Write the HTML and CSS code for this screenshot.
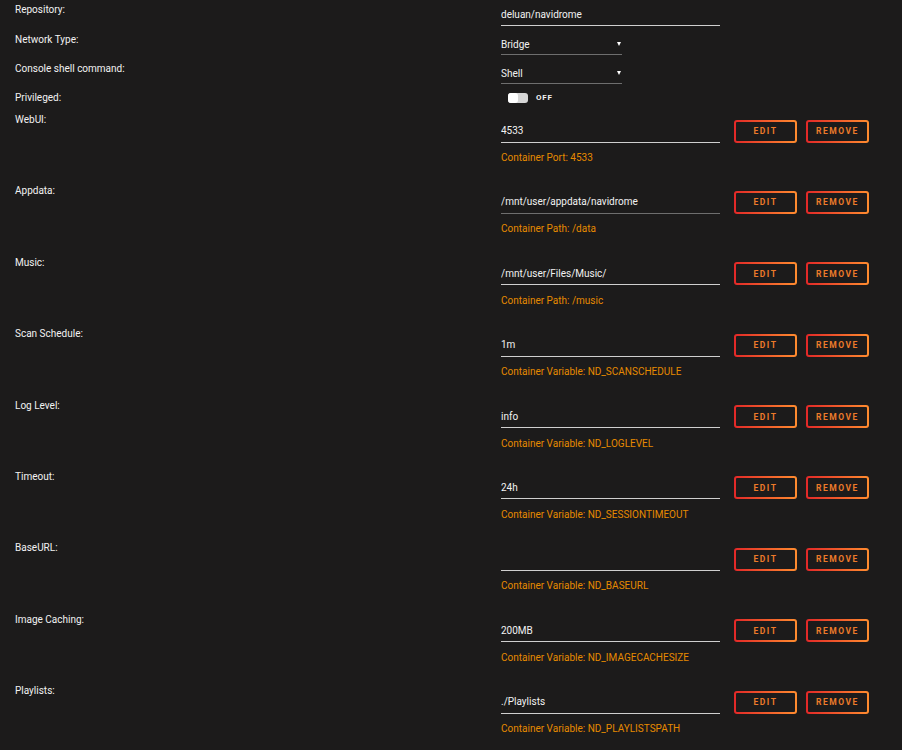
FILE: index.html
```html
<!DOCTYPE html>
<html lang="en">
<head>
    <meta charset="UTF-8">
    <meta name="viewport" content="width=device-width, initial-scale=1.0">
    <title>Update Container</title>
    <link rel="stylesheet" href="styles.css">
</head>
<body>
    <div class="form">
        <div class="row row-first">
            <div class="label">Repository:</div>
            <div class="value"><input type="text" class="text-input" value="deluan/navidrome"></div>
        </div>
        <div class="row">
            <div class="label">Network Type:</div>
            <div class="value">
                <span class="select-wrap"><select class="select-input"><option>Bridge</option></select></span>
            </div>
        </div>
        <div class="row">
            <div class="label">Console shell command:</div>
            <div class="value">
                <span class="select-wrap"><select class="select-input"><option>Shell</option></select></span>
            </div>
        </div>
        <div class="row row-toggle">
            <div class="label">Privileged:</div>
            <div class="value">
                <span class="switch"><span class="knob"></span></span>
                <span class="switch-text">OFF</span>
            </div>
        </div>

        <div class="config">
            <div class="label">WebUI:</div>
            <div class="value">
                <div class="field-line">
                    <input type="text" class="text-input" value="4533">
                    <button class="btn">EDIT</button>
                    <button class="btn">REMOVE</button>
                </div>
                <div class="hint">Container Port: 4533</div>
            </div>
        </div>
        <div class="config">
            <div class="label">Appdata:</div>
            <div class="value">
                <div class="field-line">
                    <input type="text" class="text-input dim" value="/mnt/user/appdata/navidrome">
                    <button class="btn">EDIT</button>
                    <button class="btn">REMOVE</button>
                </div>
                <div class="hint">Container Path: /data</div>
            </div>
        </div>
        <div class="config">
            <div class="label">Music:</div>
            <div class="value">
                <div class="field-line">
                    <input type="text" class="text-input" value="/mnt/user/Files/Music/">
                    <button class="btn">EDIT</button>
                    <button class="btn">REMOVE</button>
                </div>
                <div class="hint">Container Path: /music</div>
            </div>
        </div>
        <div class="config">
            <div class="label">Scan Schedule:</div>
            <div class="value">
                <div class="field-line">
                    <input type="text" class="text-input" value="1m">
                    <button class="btn">EDIT</button>
                    <button class="btn">REMOVE</button>
                </div>
                <div class="hint">Container Variable: ND_SCANSCHEDULE</div>
            </div>
        </div>
        <div class="config">
            <div class="label">Log Level:</div>
            <div class="value">
                <div class="field-line">
                    <input type="text" class="text-input" value="info">
                    <button class="btn">EDIT</button>
                    <button class="btn">REMOVE</button>
                </div>
                <div class="hint">Container Variable: ND_LOGLEVEL</div>
            </div>
        </div>
        <div class="config">
            <div class="label">Timeout:</div>
            <div class="value">
                <div class="field-line">
                    <input type="text" class="text-input" value="24h">
                    <button class="btn">EDIT</button>
                    <button class="btn">REMOVE</button>
                </div>
                <div class="hint">Container Variable: ND_SESSIONTIMEOUT</div>
            </div>
        </div>
        <div class="config">
            <div class="label">BaseURL:</div>
            <div class="value">
                <div class="field-line">
                    <input type="text" class="text-input" value="">
                    <button class="btn">EDIT</button>
                    <button class="btn">REMOVE</button>
                </div>
                <div class="hint">Container Variable: ND_BASEURL</div>
            </div>
        </div>
        <div class="config">
            <div class="label">Image Caching:</div>
            <div class="value">
                <div class="field-line">
                    <input type="text" class="text-input" value="200MB">
                    <button class="btn">EDIT</button>
                    <button class="btn">REMOVE</button>
                </div>
                <div class="hint">Container Variable: ND_IMAGECACHESIZE</div>
            </div>
        </div>
        <div class="config">
            <div class="label">Playlists:</div>
            <div class="value">
                <div class="field-line">
                    <input type="text" class="text-input" value="./Playlists">
                    <button class="btn">EDIT</button>
                    <button class="btn">REMOVE</button>
                </div>
                <div class="hint">Container Variable: ND_PLAYLISTSPATH</div>
            </div>
        </div>
    </div>
</body>
</html>
```

FILE: styles.css
```css
body {
    font-family: Roboto, "Liberation Sans", sans-serif;
    font-size: 10px;
    background-color: #1c1b1b;
    color: #f2f2f2;
    margin: 0;
    height: 750px;
    overflow: hidden;
}
.form {
    padding: 1px 0 0 15px;
}
.row,
.config {
    display: flex;
}
.row {
    height: 29px;
}
.row-first {
    height: 30px;
}
.row-toggle {
    height: 22px;
}
.config {
    height: 71.4px;
}
.label {
    width: 486px;
    line-height: 18px;
    flex-shrink: 0;
}
.value {
    flex: 1;
}
.text-input {
    display: block;
    width: 219px;
    height: 21px;
    margin: 3px 0 0;
    padding: 0;
    border: none;
    border-bottom: 1px solid #cfcfcf;
    background: transparent;
    color: #f2f2f2;
    font-family: inherit;
    font-size: 10px;
    outline: none;
}
.text-input.dim {
    border-bottom-color: #6e6e6e;
}
.select-wrap {
    position: relative;
    display: inline-block;
    margin-top: 3px;
}
.select-wrap::after {
    content: "";
    position: absolute;
    right: 1px;
    top: 8px;
    border-left: 2.5px solid transparent;
    border-right: 2.5px solid transparent;
    border-top: 4px solid #ffffff;
    pointer-events: none;
}
.select-input {
    appearance: none;
    -webkit-appearance: none;
    display: block;
    width: 121px;
    height: 21px;
    padding: 0;
    border: none;
    border-bottom: 1px solid #6e6e6e;
    border-radius: 0;
    background: transparent;
    color: #f2f2f2;
    font-family: inherit;
    font-size: 10px;
    outline: none;
}
.row-toggle .value {
    display: flex;
    align-items: center;
    height: 17px;
}
.switch {
    display: inline-block;
    width: 20px;
    height: 10px;
    margin-left: 7px;
    border-radius: 3px;
    background-color: #d6d6d6;
    position: relative;
}
.knob {
    position: absolute;
    left: 0;
    top: 0;
    width: 10px;
    height: 10px;
    border-radius: 3px;
    background-color: #ffffff;
}
.switch-text {
    margin-left: 8px;
    font-size: 8px;
    font-weight: bold;
    letter-spacing: 0.8px;
}
.field-line {
    display: flex;
    align-items: center;
    margin-top: 9px;
    height: 22px;
}
.field-line .text-input {
    margin: 0;
    height: 22px;
}
.btn {
    height: 23px;
    width: 63px;
    margin-left: 14px;
    padding: 0;
    border: 2px solid transparent;
    border-radius: 3px;
    background: linear-gradient(#1c1b1b, #1c1b1b) padding-box,
                linear-gradient(90deg, #e22828, #ff8c2f) border-box;
    color: #ec7a2a;
    font-family: inherit;
    font-size: 8.5px;
    font-weight: bold;
    letter-spacing: 1.5px;
    cursor: pointer;
}
.btn + .btn {
    margin-left: 9px;
}
.hint {
    margin-top: 8px;
    line-height: 16px;
    color: #e68a00;
}
```
